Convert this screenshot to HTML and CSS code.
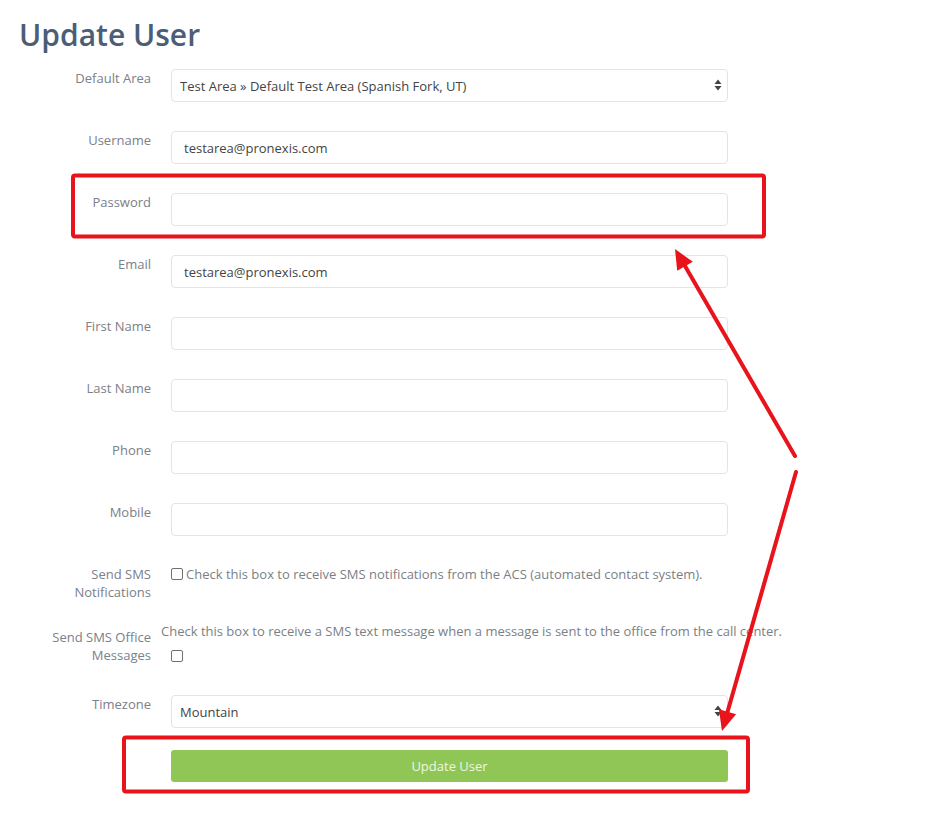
FILE: index.html
```html
<!DOCTYPE html>
<html lang="en">
<head>
<meta charset="utf-8">
<title>Update User</title>
<link rel="stylesheet" href="styles.css">
</head>
<body>
<div class="page">
  <h1 class="title">Update User</h1>
  <form class="form">
    <div class="row">
      <label class="lbl">Default Area</label>
      <div class="ctl select-wrap">
        <select class="field select"><option>Test Area » Default Test Area (Spanish Fork, UT)</option></select>
        <svg class="caret" width="8" height="12" viewBox="0 0 8 12"><path d="M4 0.5 L7.5 5 L0.5 5 Z M4 11.5 L7.5 7 L0.5 7 Z" fill="#444"/></svg>
      </div>
    </div>
    <div class="row">
      <label class="lbl">Username</label>
      <div class="ctl"><input class="field" type="text" value="testarea@pronexis.com"></div>
    </div>
    <div class="row">
      <label class="lbl">Password</label>
      <div class="ctl"><input class="field" type="password"></div>
    </div>
    <div class="row">
      <label class="lbl">Email</label>
      <div class="ctl"><input class="field" type="text" value="testarea@pronexis.com"></div>
    </div>
    <div class="row">
      <label class="lbl">First Name</label>
      <div class="ctl"><input class="field" type="text"></div>
    </div>
    <div class="row">
      <label class="lbl">Last Name</label>
      <div class="ctl"><input class="field" type="text"></div>
    </div>
    <div class="row">
      <label class="lbl">Phone</label>
      <div class="ctl"><input class="field" type="text"></div>
    </div>
    <div class="row row-mobile">
      <label class="lbl">Mobile</label>
      <div class="ctl"><input class="field" type="text"></div>
    </div>
    <div class="row row-sms">
      <label class="lbl">Send SMS Notifications</label>
      <div class="ctl check-line">
        <input class="chk" type="checkbox"><span class="help">Check this box to receive SMS notifications from the ACS (automated contact system).</span>
      </div>
    </div>
    <div class="row row-office">
      <label class="lbl lbl-office">Send SMS Office Messages</label>
      <div class="ctl">
        <div class="help help-office">Check this box to receive a SMS text message when a message is sent to the office from the call center.</div>
        <div class="check-line check-under"><input class="chk" type="checkbox"></div>
      </div>
    </div>
    <div class="row row-tz">
      <label class="lbl">Timezone</label>
      <div class="ctl select-wrap">
        <select class="field select"><option>Mountain</option></select>
        <svg class="caret" width="8" height="12" viewBox="0 0 8 12"><path d="M4 0.5 L7.5 5 L0.5 5 Z M4 11.5 L7.5 7 L0.5 7 Z" fill="#444"/></svg>
      </div>
    </div>
    <div class="row">
      <div class="lbl"></div>
      <div class="ctl"><button class="btn" type="button">Update User</button></div>
    </div>
  </form>
</div>
<svg class="annot" width="930" height="822" viewBox="0 0 930 822">
  <rect x="73" y="175.5" width="691" height="61" rx="2" fill="none" stroke="#e8131b" stroke-width="4"/>
  <rect x="124" y="737.5" width="624" height="54" rx="2" fill="none" stroke="#e8131b" stroke-width="4"/>
  <line x1="795" y1="456" x2="685" y2="266" stroke="#e8131b" stroke-width="4" stroke-linecap="round"/>
  <polygon points="675,249 692.8,261.8 677.2,270.8" fill="#e8131b"/>
  <line x1="796" y1="472" x2="727.5" y2="712" stroke="#e8131b" stroke-width="4" stroke-linecap="round"/>
  <polygon points="722,731 736.1,714.3 718.9,709.3" fill="#e8131b"/>
</svg>
</body>
</html>
```

FILE: styles.css
```css
html, body {
  margin: 0;
  padding: 0;
  background: #ffffff;
}
body {
  font-family: "Open Sans", "Liberation Sans", sans-serif;
  font-size: 13px;
  color: #444;
  width: 930px;
  height: 822px;
  overflow: hidden;
  position: relative;
}
.page {
  padding-left: 19px;
}
.title {
  margin: 0 0 12px 0;
  padding-top: 13px;
  font-size: 30px;
  line-height: 44px;
  font-weight: 600;
  color: #4b5e77;
}
.form {
  margin: 0;
}
.row {
  display: grid;
  grid-template-columns: 132px 557px;
  column-gap: 20px;
  margin-bottom: 29px;
}
.lbl {
  text-align: right;
  line-height: 18px;
  color: #7b8089;
  padding-left: 22px;
}
.ctl {
  position: relative;
}
.field {
  display: block;
  box-sizing: border-box;
  width: 557px;
  height: 33px;
  margin: 0;
  border: 1px solid #e4e4e4;
  border-radius: 4px;
  background: #fff;
  padding: 0 12px;
  font-family: "Open Sans", "Liberation Sans", sans-serif;
  font-size: 13px;
  color: #444;
  outline: none;
}
.select {
  -webkit-appearance: none;
  appearance: none;
  padding-left: 8px;
}
.caret {
  position: absolute;
  right: 6px;
  top: 10px;
}
.row-mobile {
  margin-bottom: 29px;
}
.row-sms {
  margin-bottom: 21px;
}
.check-line {
  display: flex;
  align-items: center;
  height: 18px;
  line-height: 18px;
}
.chk {
  -webkit-appearance: none;
  appearance: none;
  box-sizing: border-box;
  width: 12px;
  height: 12px;
  margin: 0 3px 0 0;
  border: 1px solid #6f6f6f;
  border-radius: 2px;
  background: #fff;
  flex: none;
}
.help {
  color: #7b7f85;
  line-height: 18px;
  white-space: nowrap;
}
.row-office {
  margin-bottom: 30px;
}
.lbl-office {
  padding-top: 6px;
}
.help-office {
  margin-left: -10px;
}
.check-under {
  margin-top: 7px;
}
.row-tz {
  margin-bottom: 22px;
}
.btn {
  display: block;
  width: 557px;
  height: 32px;
  margin: 0;
  border: none;
  border-radius: 3px;
  background: #8fc655;
  color: #eef7e2;
  font-family: "Open Sans", "Liberation Sans", sans-serif;
  font-size: 13px;
  padding: 0;
}
.annot {
  position: absolute;
  left: 0;
  top: 0;
  pointer-events: none;
}
```
